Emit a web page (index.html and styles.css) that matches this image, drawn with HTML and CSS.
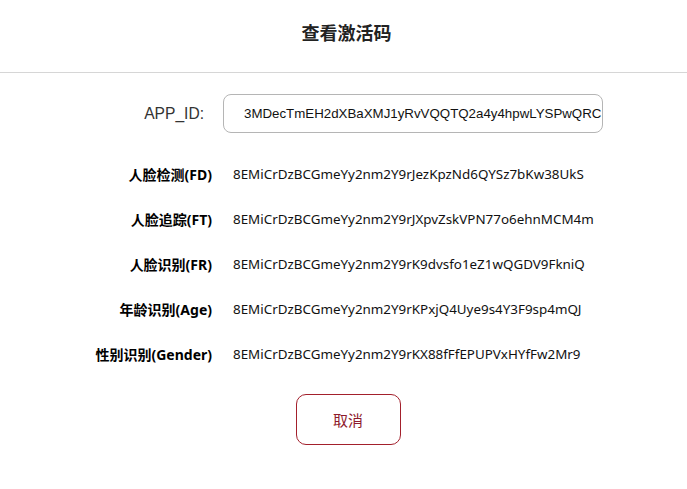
FILE: index.html
```html
<!DOCTYPE html>
<html lang="zh-CN">
  <head>
    <meta charset="UTF-8" />
    <meta name="viewport" content="width=device-width, initial-scale=1.0" />
    <title>查看激活码</title>
    <link rel="stylesheet" href="styles.css">
  </head>
  <body>
    <div class="dialog">
      <div class="dialog-header">
        <h1>查看激活码</h1>
      </div>
      <div class="dialog-body">
        <div class="app-row">
          <label class="app-label">APP_ID:</label>
          <div class="app-input">3MDecTmEH2dXBaXMJ1yRvVQQTQ2a4y4hpwLYSPwQRC</div>
        </div>
        <div class="key-list">
          <div class="key-row">
            <span class="key-label">人脸检测(FD)</span>
            <span class="key-value">8EMiCrDzBCGmeYy2nm2Y9rJezKpzNd6QYSz7bKw38UkS</span>
          </div>
          <div class="key-row">
            <span class="key-label">人脸追踪(FT)</span>
            <span class="key-value">8EMiCrDzBCGmeYy2nm2Y9rJXpvZskVPN77o6ehnMCM4m</span>
          </div>
          <div class="key-row">
            <span class="key-label">人脸识别(FR)</span>
            <span class="key-value">8EMiCrDzBCGmeYy2nm2Y9rK9dvsfo1eZ1wQGDV9FkniQ</span>
          </div>
          <div class="key-row">
            <span class="key-label">年龄识别(Age)</span>
            <span class="key-value">8EMiCrDzBCGmeYy2nm2Y9rKPxjQ4Uye9s4Y3F9sp4mQJ</span>
          </div>
          <div class="key-row">
            <span class="key-label">性别识别(Gender)</span>
            <span class="key-value">8EMiCrDzBCGmeYy2nm2Y9rKX88fFfEPUPVxHYfFw2Mr9</span>
          </div>
        </div>
        <div class="dialog-footer">
          <button class="cancel-button">取消</button>
        </div>
      </div>
    </div>
  </body>
</html>
```

FILE: styles.css
```css
body {
  margin: 0;
  padding: 0;
  background: #fff;
  font-family: "Noto Sans", "Noto Sans CJK SC", sans-serif;
  color: #111;
}
.dialog-header {
  height: 72px;
  display: flex;
  justify-content: center;
  align-items: center;
  border-bottom: 1px solid #d6d6d6;
}
h1 {
  margin: 0;
  font-size: 18px;
  font-weight: bold;
  color: #222;
  font-family: "Noto Sans CJK SC", sans-serif;
  padding-bottom: 8px;
  padding-left: 6px;
}
.dialog-body {
  padding-top: 21px;
}
.app-row {
  display: grid;
  grid-template-columns: 204px 380px;
  column-gap: 19px;
  align-items: center;
}
.app-label {
  text-align: right;
  font-family: "Liberation Sans", Arial, sans-serif;
  font-size: 15.6px;
  color: #333;
}
.app-input {
  box-sizing: border-box;
  height: 39px;
  border: 1px solid #b5b5b5;
  border-radius: 8px;
  padding-left: 20px;
  line-height: 37px;
  font-family: "Liberation Sans", Arial, sans-serif;
  font-size: 13.3px;
  color: #111;
  white-space: nowrap;
  overflow: hidden;
}
.key-list {
  margin-top: 18px;
  display: flex;
  flex-direction: column;
}
.key-row {
  display: grid;
  grid-template-columns: 212px 1fr;
  column-gap: 21px;
  align-items: center;
  height: 45px;
}
.key-label {
  text-align: right;
  font-size: 14px;
  font-weight: bold;
  color: #000;
}
.key-value {
  font-size: 13.4px;
  color: #111;
}
.dialog-footer {
  display: flex;
  justify-content: center;
  padding-top: 18px;
}
.cancel-button {
  width: 105px;
  height: 51px;
  margin-left: 9px;
  background: #fff;
  border: 1px solid #a3202c;
  border-radius: 10px;
  color: #8e1a2c;
  font-size: 15px;
  font-family: "Noto Sans CJK SC", sans-serif;
  cursor: pointer;
}
```
